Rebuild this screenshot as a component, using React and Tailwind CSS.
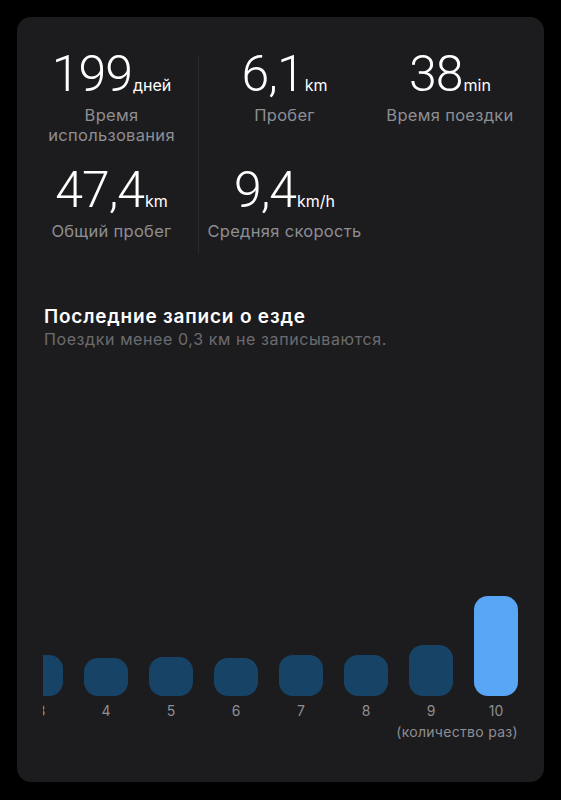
import React from 'react';

const stats = [
  { value: '199', unit: 'дней', label: ['Время', 'использования'], divider: false },
  { value: '6,1', unit: 'km', label: ['Пробег'], divider: true },
  { value: '38', unit: 'min', label: ['Время поездки'], divider: false },
  { value: '47,4', unit: 'km', label: ['Общий пробег'], divider: false },
  { value: '9,4', unit: 'km/h', label: ['Средняя скорость'], divider: true },
];

const bars = [
  { n: 3, h: 41 },
  { n: 4, h: 38 },
  { n: 5, h: 39 },
  { n: 6, h: 38 },
  { n: 7, h: 41 },
  { n: 8, h: 41 },
  { n: 9, h: 51 },
  { n: 10, h: 100, active: true },
];

const Stat = ({ value, unit, label, divider, row }) => (
  <div
    className={
      'flex flex-col items-center ' +
      (divider ? 'border-l border-[#2a2a2c] ' : '') +
      (row === 0 ? 'pb-[27px]' : 'pb-[13px]')
    }
  >
    <div className="flex items-baseline leading-[36px]">
      <span className="text-[50px] font-light text-white tracking-[-1px] font-['Roboto',sans-serif]">{value}</span>
      <span className="text-[16px] leading-none text-white ml-[1px]">{unit}</span>
    </div>
    <div className="mt-[12px] text-[16.5px] leading-[20px] tracking-[0.3px] text-[#8e8e93] text-center">
      {label.map((l) => (
        <div key={l}>{l}</div>
      ))}
    </div>
  </div>
);

const App = () => {
  return (
    <div className="min-h-screen bg-black p-[17px] font-['Inter',sans-serif]">
      <div className="w-[527px] h-[765px] bg-[#1c1c1e] rounded-[14px] pt-[39px] flex flex-col">
        <div className="grid grid-cols-[173px_172px_1fr] pl-[8px] pr-[14px]">
          {stats.map((s, i) => (
            <Stat key={i} {...s} row={i < 3 ? 0 : 1} />
          ))}
        </div>

        <div className="px-[27px] mt-[51px]">
          <h2 className="text-[19px] leading-[24px] font-semibold tracking-[0.8px] text-white">Последние записи о езде</h2>
          <p className="text-[16px] leading-[20px] tracking-[0.6px] text-[#6c6c70]">Поездки менее 0,3 км не записываются.</p>
        </div>

        <div className="ml-[26px] mr-[26px] overflow-hidden">
          <div className="h-[347px] flex items-end justify-end gap-[21px]">
            {bars.map((b) => (
              <div
                key={b.n}
                className={
                  'w-[44px] shrink-0 rounded-[14px] ' + (b.active ? 'bg-[#5aa6f6]' : 'bg-[#174367]')
                }
                style={{ height: b.h }}
              />
            ))}
          </div>
          <div className="mt-[6px] flex justify-end gap-[21px]">
            {bars.map((b) => (
              <div key={b.n} className="w-[44px] shrink-0 text-center text-[14px] leading-[18px] text-[#8e8e93]">
                {b.n}
              </div>
            ))}
          </div>
          <div className="mt-[3px] text-right text-[14px] leading-[18px] tracking-[0.3px] text-[#8e8e93]">(количество раз)</div>
        </div>
      </div>
    </div>
  );
};

export default App;
